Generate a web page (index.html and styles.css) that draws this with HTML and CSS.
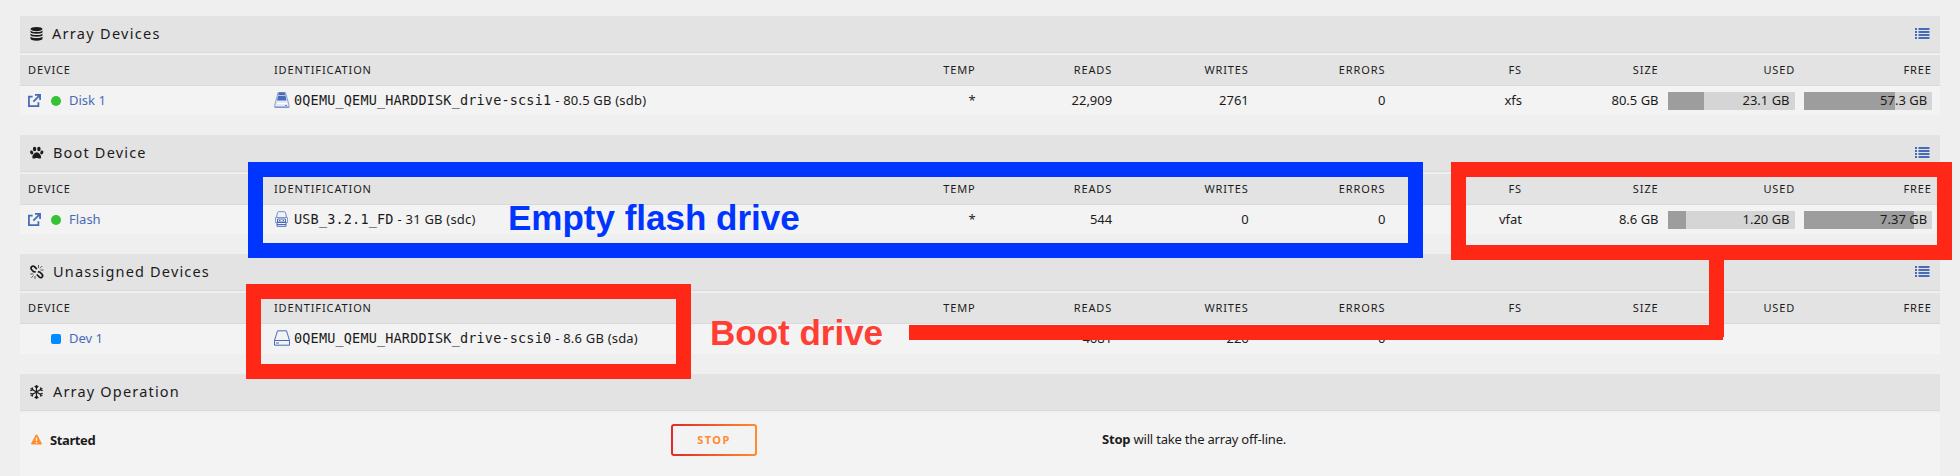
FILE: index.html
```html
<!DOCTYPE html>
<html lang="en">
<head>
<meta charset="utf-8">
<title>Main</title>
<link rel="stylesheet" href="styles.css">
</head>
<body>
<svg class="defs" width="0" height="0">
  <symbol id="list" viewBox="0 0 15 11"><path d="M0 0h2v2H0zM0 3h2v2H0zM0 6h2v2H0zM0 9h2v2H0zM3.500 0H14.500v2H3.500zM3.500 3H14.500v2H3.500zM3.500 6H14.500v2H3.500zM3.500 9H14.500v2H3.500z"/></symbol>
  <symbol id="ext" viewBox="0 0 14 14"><path d="M5 2.800H1V13h10.200V9M7.500 1H13v5.500M13 1L5.800 8.200" fill="none" stroke="currentColor" stroke-width="1.900"/></symbol>
</svg>
<main class="page">
  <section class="panel">
    <header class="title">
      <svg class="ticon solid" viewBox="0 0 14 14"><ellipse cx="6.500" cy="2.100" rx="6" ry="2.100"/><path d="M.5 3.500q1.500 1.500 6 1.500t6-1.500v1.500q0 1.700-6 1.700t-6-1.700zM.5 6.500q1.500 1.500 6 1.500t6-1.500v1.500q0 1.700-6 1.700t-6-1.700zM.5 9.600q1.500 1.500 6 1.500t6-1.500v2q0 2-6 2.200-6-.2-6-2.200z"/></svg>
      <h2 class="tight">Array Devices</h2><svg class="list"><use href="#list"/></svg>
    </header>
    <div class="grid head"><span>Device</span><span>Identification</span><span>Temp</span><span>Reads</span><span>Writes</span><span>Errors</span><span>FS</span><span>Size</span><span>Used</span><span>Free</span></div>
    <div class="grid row">
      <span class="dev"><svg class="ext"><use href="#ext"/></svg><i class="dot"></i><a>Disk 1</a></span>
      <span class="ident"><svg class="drive" viewBox="0 0 16 16"><path d="M4 .5h7.500l3.500 12.500v2.500H.8V13z" fill="#e4e9f4" stroke="#8da2d3"/><path d="M4.800.5h6l1.700 8h-9.500z" fill="#486bb8"/><path d="M4.200 3.500h7.200" stroke="#b9c7e4"/><path d="M3 11.500h10" stroke="#fff"/><path d="M11 13.500h2M1 15h14" stroke="#6e88c7"/></svg><code>0QEMU_QEMU_HARDDISK_drive-scsi1</code><b>- 80.5 GB (sdb)</b></span>
      <span>*</span><span>22,909</span><span>2761</span><span>0</span><span>xfs</span><span>80.5 GB</span>
      <span class="bar"><i style="width:29%"></i><em>23.1 GB</em></span><span class="bar last"><i style="width:71.300%"></i><em>57.3 GB</em></span>
    </div>
  </section>
  <section class="panel">
    <header class="title">
      <svg class="ticon solid" viewBox="0 0 14 14"><ellipse cx="4.600" cy="3" rx="1.700" ry="2.300"/><ellipse cx="8.900" cy="3" rx="1.700" ry="2.300"/><ellipse cx="1.700" cy="6.500" rx="1.500" ry="2" transform="rotate(-20 1.700 6.500)"/><ellipse cx="11.800" cy="6.500" rx="1.500" ry="2" transform="rotate(20 11.800 6.500)"/><path d="M6.750 6.300c2 0 4.400 3 4.400 4.900 0 1.300-1 1.400-1.700 1.400-1 0-1.700-.6-2.700-.6s-1.700.6-2.700.6c-.8 0-1.700-.2-1.700-1.400 0-1.900 2.400-4.900 4.400-4.900z"/></svg>
      <h2>Boot Device</h2><svg class="list"><use href="#list"/></svg>
    </header>
    <div class="grid head"><span>Device</span><span>Identification</span><span>Temp</span><span>Reads</span><span>Writes</span><span>Errors</span><span>FS</span><span>Size</span><span>Used</span><span>Free</span></div>
    <div class="grid row">
      <span class="dev"><svg class="ext"><use href="#ext"/></svg><i class="dot"></i><a>Flash</a></span>
      <span class="ident"><svg class="drive" viewBox="0 0 16 16" fill="none"><path d="M2.500 6.500L3.500 1.500 4.500.7h6l1 .8 1 5" stroke="#6e88c7"/><path d="M1.500 6.500h12v5h-12z" stroke="#8299d0"/><path d="M3.500 8h8v3h-8z" fill="#fff" stroke="#486bb8"/><path d="M5 9.500h1.500M8.500 9.500H10" stroke="#486bb8"/><path d="M3 11.500h9v3.800H3zM3 13.500h9" stroke="#486bb8"/></svg><code>USB_3.2.1_FD</code><b>- 31 GB (sdc)</b></span>
      <span>*</span><span>544</span><span>0</span><span>0</span><span>vfat</span><span>8.6 GB</span>
      <span class="bar"><i style="width:14.200%"></i><em>1.20 GB</em></span><span class="bar last"><i style="width:86%"></i><em>7.37 GB</em></span>
    </div>
  </section>
  <section class="panel tall">
    <header class="title">
      <svg class="ticon" viewBox="0 0 14 14"><path d="M6.800 4.200L4.500 1.700Q3 .5 1.700 1.700T1.500 4.500L3.500 6.600 5.800 7M6.800 9.500l2.600 2.700q1.300 1.100 2.600-.1t.1-2.700L10 7.200 7.900 6.600" stroke-width="1.700"/><path d="M8.500 0v3M12.200 1L10 3.300M13.500 5h-3M.3 9h3M1.300 12.800l2.300-2.300M5 11v3" stroke-width=".7"/></svg>
      <h2>Unassigned Devices</h2><svg class="list"><use href="#list"/></svg>
    </header>
    <div class="grid head"><span>Device</span><span>Identification</span><span>Temp</span><span>Reads</span><span>Writes</span><span>Errors</span><span>FS</span><span>Size</span><span>Used</span><span>Free</span></div>
    <div class="grid row">
      <span class="dev"><i class="ext"></i><i class="dot square"></i><a>Dev 1</a></span>
      <span class="ident"><svg class="drive" viewBox="0 0 16 16" fill="none" stroke="#486bb8"><path d="M.5 10.500L3.500.8h9l3 9.700v4.700H.5zM.5 10.500h15"/><path d="M2 13h3"/></svg><code>0QEMU_QEMU_HARDDISK_drive-scsi0</code><b>- 8.6 GB (sda)</b></span>
      <span></span><span>4681</span><span>226</span><span>0</span><span></span><span></span><span></span><span></span>
    </div>
  </section>
  <section class="panel">
    <header class="title">
      <svg class="ticon" viewBox="0 0 14 14" stroke-width="1.200"><path d="M6.500 0v14M.5 3.500l12 7M12.500 3.500l-12 7M4.700 1l1.800 1.800L8.300 1M4.700 13l1.800-1.800L8.300 13M.3 5.800l2.500-.9-.7-2.600M12.700 5.800l-2.500-.9.7-2.600M.3 8.200l2.500.9-.7 2.600M12.700 8.200l-2.500.9.7 2.600"/></svg>
      <h2>Array Operation</h2>
    </header>
    <div class="operation">
      <div class="state"><svg class="warn" viewBox="0 0 12 11"><path d="M6 0Q6.600 0 7 .7l4.700 8.800q.5 1.500-.8 1.500H1.100Q-.2 11 .3 9.500L5 .7Q5.400 0 6 0z" fill="#ff8c2f"/><path d="M6 3.500v3.600M6 8.200v1.500" stroke="#fff" stroke-width="1.500"/></svg><strong>Started</strong></div>
      <div class="action"><button>STOP</button></div>
      <p><strong>Stop</strong> <span>will take the array off-line.</span></p>
    </div>
  </section>
  <div class="mark blue"></div>
  <div class="mark red boot"></div>
  <div class="mark red usage"></div>
  <div class="line vertical"></div>
  <div class="line horizontal"></div>
  <div class="note flash-note">Empty flash drive</div>
  <div class="note boot-note">Boot drive</div>
</main>
</body>
</html>
```
FILE: styles.css
```css
* { box-sizing: border-box; }
body { margin: 0; background: #efefef; color: #1c1b1b; font: 13px/20px "Noto Sans", sans-serif; }
.defs { position: absolute; }
.page { position: relative; width: 1960px; height: 476px; padding: 16px 20px 0; overflow: hidden; }
.panel { margin-bottom: 20px; }
.title { display: flex; align-items: center; height: 37px; padding: 0 10px; margin-bottom: 2px; background: #e3e3e3; border-bottom: 1px solid #dadada; }
.ticon { width: 14px; height: 14px; fill: none; stroke: #1c1b1b; }
.ticon.solid { fill: #1c1b1b; stroke: none; }
h2 { margin: 0 0 2px; padding-left: 9px; font-size: 14.500px; font-weight: 400; letter-spacing: 1.180px; white-space: nowrap; }
h2.tight { padding-left: 8px; letter-spacing: 1.3px; }
.list { width: 15px; height: 11px; margin: 0 0 1px auto; fill: #486bb8; }
.grid { display: grid; grid-template-columns: 246px 581px repeat(8, 136.600px); align-items: center; white-space: nowrap; }
.grid > span { padding: 0 8px; text-align: right; }
.grid > span:nth-child(-n+2) { text-align: left; }
.head { height: 31px; font-size: 11px; letter-spacing: .88px; text-transform: uppercase; background: #e3e3e3; border-bottom: 1px solid #dadada; }
.row { height: 29px; padding-bottom: 1px; background: #f3f3f3; }
.tall .row { height: 30px; padding-bottom: 2px; }
.dev, .ident { display: flex; align-items: center; }
.ext { width: 13px; height: 13px; color: #486bb8; }
.dot { width: 10px; height: 10px; margin: 2px 8px 0 10px; border-radius: 50%; background: #33c333; }
.square { border-radius: 2px; background: #008cff; }
.dev a { color: #486bb8; }
.drive { width: 16px; height: 16px; margin-right: 4px; }
code { font: 13.500px/20px "DejaVu Sans Mono", monospace; letter-spacing: .17px; }
.ident b { margin-left: 4px; font-weight: 400; letter-spacing: .2px; }
.grid > .bar { position: relative; height: 18px; width: 127px; margin: 2px 0 0 1px; padding: 0 5px; line-height: 17px; background: #d5d5d5; }
.grid > .bar.last { width: 128px; }
.bar i { position: absolute; inset: 0 auto 0 0; background: #9d9d9d; }
.bar em { position: relative; font-style: normal; }
.operation { display: grid; grid-template-columns: 651px 431px 1fr; height: 63px; padding-top: 11px; background: #f3f3f3; }
.state { display: flex; align-items: center; height: 31px; padding-left: 11px; gap: 8px; }
.warn { width: 11px; height: 11px; }
.state strong { letter-spacing: -.4px; }
.operation p { margin: 0; line-height: 31px; letter-spacing: -.2px; }
button { width: 86px; height: 32px; padding: 0; border: 2px solid transparent; border-radius: 3px; background: linear-gradient(#f3f3f3, #f3f3f3) padding-box, linear-gradient(90deg, #e22828, #ff8c2f) border-box; color: #ff8c2f; font: bold 11px/28px "Noto Sans", sans-serif; letter-spacing: 1.500px; }
.mark { position: absolute; border: 15px solid #ff2816; }
.blue { left: 248px; top: 162px; width: 1175px; height: 96px; border-color: #0035ff; }
.boot { left: 246px; top: 284px; width: 445px; height: 95px; }
.usage { left: 1451px; top: 162px; width: 501px; height: 98px; }
.line { position: absolute; background: #ff2816; }
.vertical { left: 1709px; top: 260px; width: 15px; height: 77px; }
.horizontal { left: 909px; top: 325px; width: 814px; height: 15px; }
.note { position: absolute; font: bold 35px/40px "Liberation Sans", Arial, sans-serif; white-space: nowrap; }
.flash-note { left: 508px; top: 198px; color: #0035ff; }
.boot-note { left: 710px; top: 313px; color: #ff3f35; }
```
